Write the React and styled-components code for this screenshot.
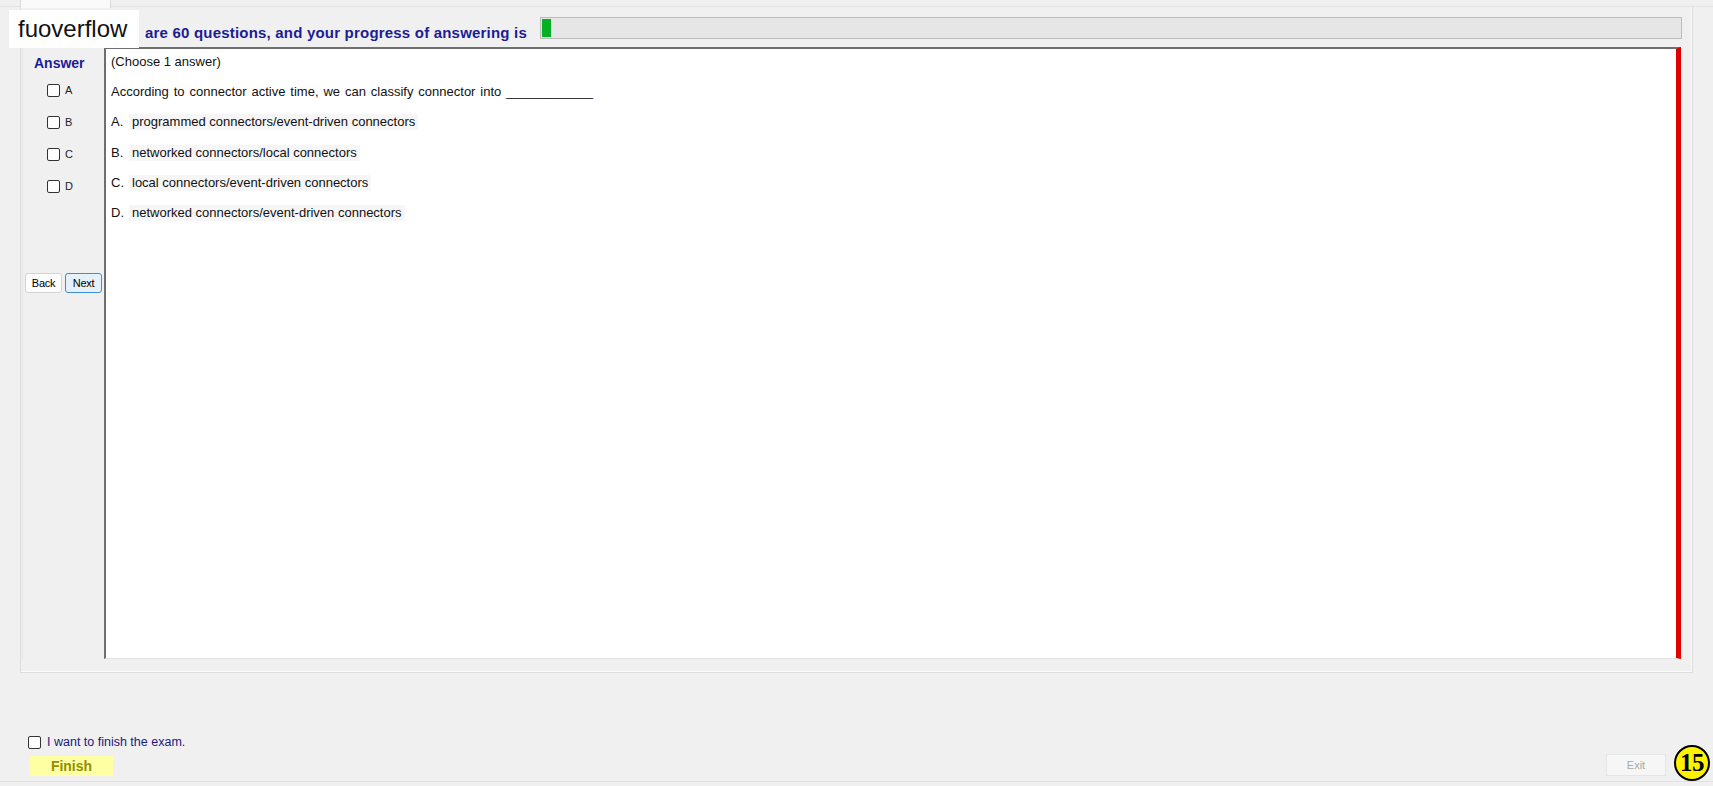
import React from 'react';
import styled, { createGlobalStyle } from 'styled-components';

const Global = createGlobalStyle`
  html, body { margin: 0; padding: 0; background: #f0f0f0; }
  body { font-family: "Liberation Sans", Arial, sans-serif; overflow: hidden; }
  * { box-sizing: border-box; }
`;

const Window = styled.div`
  position: relative;
  width: 1713px;
  height: 786px;
  display: flex;
  flex-direction: column;
  background: #f0f0f0;
`;

const TabStrip = styled.div`
  height: 7px;
  padding-left: 20px;
  display: flex;
  border-bottom: 1px solid #e2e2e2;
`;

const Tab = styled.div`
  width: 91px;
  height: 8px;
  background: #fafafa;
  border-left: 1px solid #dadada;
  border-right: 1px solid #dadada;
`;

const TabPage = styled.div`
  margin: 0 20px 0 20px;
  height: 666px;
  border: 1px solid #dcdcdc;
  border-top: none;
  box-shadow: inset -1px -1px 0 #fbfbfb;
  display: flex;
  flex-direction: column;
`;

const HeaderRow = styled.div`
  height: 40px;
  display: flex;
  align-items: center;
  padding: 0 10px 0 124px;
  gap: 13px;
`;

const HeaderText = styled.div`
  font-size: 15px;
  letter-spacing: 0.2px;
  font-weight: bold;
  line-height: 16px;
  margin-top: 11px;
  color: #1c1c94;
  white-space: nowrap;
`;

const ProgressTrack = styled.div`
  flex: 1;
  height: 22px;
  margin-top: 1px;
  background: #e6e6e6;
  border: 1px solid #bcbcbc;
  padding: 1px;
  display: flex;
`;

const ProgressFill = styled.div`
  height: 100%;
  background: #06b025;
`;

const ContentRow = styled.div`
  display: flex;
  height: 612px;
  padding-left: 1px;
`;

const LeftPanel = styled.div`
  width: 82px;
  display: flex;
  flex-direction: column;
  border-left: 1px solid #e6e6e6;
`;

const AnswerTitle = styled.div`
  margin: 8px 0 3px 11px;
  font-size: 14px;
  line-height: 16px;
  font-weight: bold;
  color: #1c1c94;
`;

const ChoiceRow = styled.label`
  height: 32px;
  display: flex;
  align-items: center;
  gap: 5px;
  padding-left: 24px;
  font-size: 11px;
  color: #222;
`;

const Box = styled.span`
  width: 13px;
  height: 13px;
  border: 1px solid #333;
  border-radius: 2px;
  background: #fff;
  display: inline-block;
  flex: none;
`;

const NavRow = styled.div`
  display: flex;
  gap: 3px;
  padding-left: 2px;
  margin-top: 71px;
`;

const NavButton = styled.button`
  width: 37px;
  height: 20px;
  padding: 0;
  font-family: "Liberation Sans", Arial, sans-serif;
  font-size: 11px;
  letter-spacing: -0.3px;
  color: #000;
  border-radius: 3px;
  border: 1px solid ${p => (p.$active ? '#3d8fd6' : '#d4d4d4')};
  background: ${p => (p.$active ? '#e5f1fb' : '#fdfdfd')};
`;

const TextBox = styled.div`
  flex: 1;
  margin-right: 11px;
  background: #fff;
  border-top: 2px solid #6f6f6f;
  border-left: 2px solid #6f6f6f;
  border-bottom: 1px solid #e4e4e4;
  border-right: 5px solid #e00000;
  padding: 5px 0 0 5px;
  display: flex;
  flex-direction: column;
  gap: 14.2px;
`;

const Line = styled.div`
  font-size: 13px;
  line-height: 16px;
  word-spacing: ${p => (p.$wide ? '1.3px' : '0')};
  color: #111;
  white-space: nowrap;
  display: flex;
`;

const OptLetter = styled.span`
  width: 18px;
`;

const OptText = styled.span`
  background: #f6f6f6;
  padding: 0 3px;
`;

const Footer = styled.div`
  flex: 1;
  display: flex;
  flex-direction: column;
  justify-content: flex-end;
  padding: 0 0 5px 28px;
  border-bottom: 1px solid #e0e0e0;
  margin-bottom: 4px;
`;

const FinishCheck = styled.label`
  display: flex;
  align-items: center;
  gap: 6px;
  height: 14px;
  margin-bottom: 5px;
  font-size: 12.5px;
  color: #1a1a80;
`;

const BottomRow = styled.div`
  display: flex;
  justify-content: space-between;
  align-items: flex-end;
  padding-right: 47px;
`;

const FinishButton = styled.button`
  margin-left: 2px;
  width: 83px;
  height: 20px;
  padding: 0;
  border: none;
  background: #ffffa3;
  color: #8f8f00;
  font-family: "Liberation Sans", Arial, sans-serif;
  font-weight: bold;
  font-size: 14px;
`;

const ExitButton = styled.button`
  width: 60px;
  height: 22px;
  padding: 0;
  border: 1px solid #e6e6e6;
  background: #f6f6f6;
  color: #a8a8a8;
  font-family: "Liberation Sans", Arial, sans-serif;
  font-size: 11px;
`;

const Logo = styled.div`
  position: absolute;
  left: 9px;
  top: 10px;
  width: 130px;
  height: 38px;
  background: #fff;
  font-family: "Liberation Sans", Arial, sans-serif;
  font-size: 24px;
  color: #111;
  display: flex;
  align-items: center;
  padding-left: 9px;
`;

const Badge = styled.div`
  position: absolute;
  right: 3px;
  bottom: 5px;
  width: 36px;
  height: 36px;
  border-radius: 50%;
  background: #fff200;
  border: 2px solid #000;
  display: flex;
  align-items: center;
  justify-content: center;
  font-family: "Liberation Serif", "Times New Roman", serif;
  font-weight: bold;
  font-size: 25px;
  letter-spacing: -0.5px;
  color: #000;
`;

const options = [
  ['A.', 'programmed connectors/event-driven connectors'],
  ['B.', 'networked connectors/local connectors'],
  ['C.', 'local connectors/event-driven connectors'],
  ['D.', 'networked connectors/event-driven connectors'],
];

export default function App() {
  return (
    <Window>
      <Global />
      <TabStrip>
        <Tab />
      </TabStrip>
      <TabPage>
        <HeaderRow>
          <HeaderText>are 60 questions, and your progress of answering is</HeaderText>
          <ProgressTrack>
            <ProgressFill style={{ width: '9px' }} />
          </ProgressTrack>
        </HeaderRow>
        <ContentRow>
          <LeftPanel>
            <AnswerTitle>Answer</AnswerTitle>
            {['A', 'B', 'C', 'D'].map(l => (
              <ChoiceRow key={l}>
                <Box />
                {l}
              </ChoiceRow>
            ))}
            <NavRow>
              <NavButton>Back</NavButton>
              <NavButton $active>Next</NavButton>
            </NavRow>
          </LeftPanel>
          <TextBox>
            <Line>(Choose 1 answer)</Line>
            <Line $wide>According to connector active time, we can classify connector into ____________</Line>
            {options.map(([l, t]) => (
              <Line key={l}>
                <OptLetter>{l}</OptLetter>
                <OptText>{t}</OptText>
              </Line>
            ))}
          </TextBox>
        </ContentRow>
      </TabPage>
      <Footer>
        <FinishCheck>
          <Box />
          I want to finish the exam.
        </FinishCheck>
        <BottomRow>
          <FinishButton>Finish</FinishButton>
          <ExitButton>Exit</ExitButton>
        </BottomRow>
      </Footer>
      <Logo>fuoverflow</Logo>
      <Badge>15</Badge>
    </Window>
  );
}
